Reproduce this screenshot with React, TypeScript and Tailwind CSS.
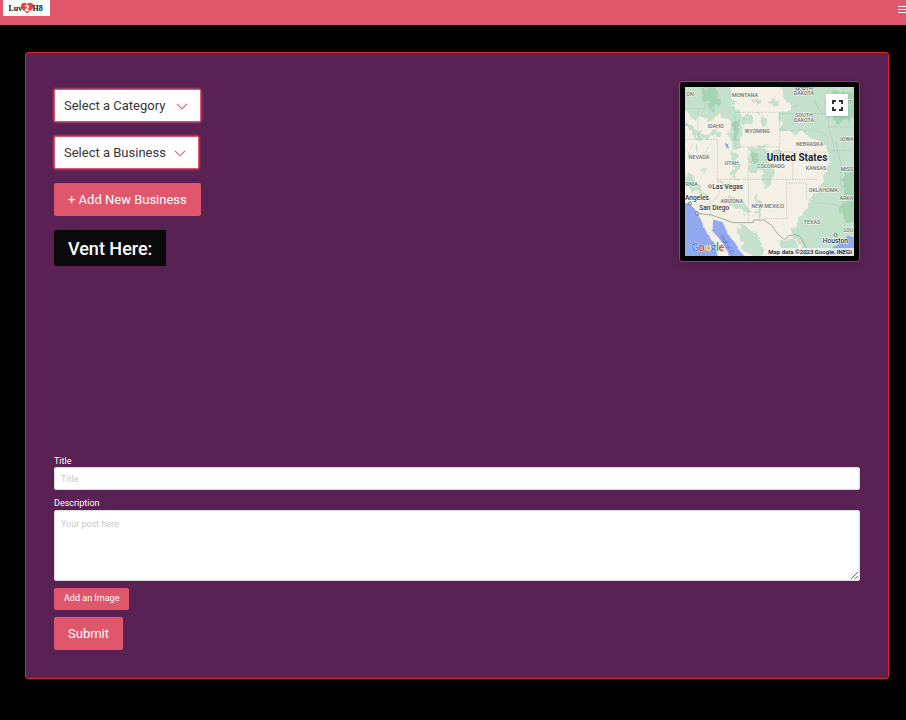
import type { ReactNode } from "react";

type MapLabel = { x: number; y: number; text: string };

const stateLabels: MapLabel[] = [
  { x: 30, y: 43, text: "ON" },
  { x: 195, y: 46, text: "MONTANA" },
  { x: 372, y: 27, text: "NORTH" },
  { x: 372, y: 40, text: "DAKOTA" },
  { x: 476, y: 65, text: "MINNESOT" },
  { x: 372, y: 105, text: "SOUTH" },
  { x: 372, y: 120, text: "DAKOTA" },
  { x: 107, y: 139, text: "IDAHO" },
  { x: 232, y: 152, text: "WYOMING" },
  { x: 389, y: 191, text: "NEBRASKA" },
  { x: 501, y: 177, text: "IOWA" },
  { x: 57, y: 231, text: "NEVADA" },
  { x: 155, y: 248, text: "UTAH" },
  { x: 273, y: 258, text: "COLORADO" },
  { x: 408, y: 263, text: "KANSAS" },
  { x: 501, y: 267, text: "MISS" },
  { x: 35, y: 311, text: "RNIA" },
  { x: 430, y: 330, text: "OKLAHOMA" },
  { x: 499, y: 353, text: "ARKA" },
  { x: 155, y: 362, text: "ARIZONA" },
  { x: 263, y: 377, text: "NEW MEXICO" },
  { x: 396, y: 427, text: "TEXAS" },
  { x: 505, y: 451, text: "LOU" },
];

const cityLabels: MapLabel[] = [
  { x: 143, y: 320, text: "Las Vegas" },
  { x: 51, y: 353, text: "Angeles" },
  { x: 103, y: 383, text: "San Diego" },
  { x: 466, y: 484, text: "Houston" },
];

const cityDots = [
  [90, 313],
  [30, 364],
  [51, 394],
  [467, 459],
];

function RegionMap() {
  return (
    <svg
      viewBox="15 15 507 507"
      className="block h-full w-full font-[Roboto,sans-serif]"
      role="img"
      aria-label="Map of the United States"
    >
      <defs>
        <filter id="rough" x="0%" y="0%" width="100%" height="100%">
          <feTurbulence type="fractalNoise" baseFrequency="0.045" numOctaves="3" seed="4" />
          <feDisplacementMap in="SourceGraphic" scale="38" xChannelSelector="R" yChannelSelector="G" />
        </filter>
        <filter id="shore" x="0%" y="0%" width="100%" height="100%">
          <feTurbulence type="fractalNoise" baseFrequency="0.06" numOctaves="2" seed="9" />
          <feDisplacementMap in="SourceGraphic" scale="9" xChannelSelector="R" yChannelSelector="G" />
        </filter>
      </defs>

      <rect x="15" y="15" width="507" height="507" fill="#f5f0e5" />

      <g filter="url(#rough)">
        <g fill="#c3e1cb">
          <path d="M-60 -60H145L150 40L175 80L195 100L190 140L178 200L150 195L152 120L118 95L95 115L60 105L45 125L20 90L-60 100Z" />
          <path d="M290 -60H600V600H350L375 500L345 470L335 440L370 400L390 375L395 350L420 310L430 285L445 250L450 215L425 185L400 165L350 150L300 140L298 95L335 75L310 50Z" />
          <path d="M20 110L45 150L85 160L120 135L115 165L70 172L25 150Z" />
          <path d="M208 198L245 195L262 205L300 215L290 240L268 225L280 290L262 325L245 300L250 262L225 280L208 250Z" />
          <path d="M190 95L215 110L208 130L192 125Z" />
          <path d="M240 95L262 105L255 140L244 120Z" />
          <path d="M150 205L175 215L178 250L165 280L150 292L160 245Z" />
          <path d="M110 300L150 303L165 318L145 325L118 312Z" />
          <path d="M145 340L190 355L212 385L200 398L170 375L140 365Z" />
          <path d="M228 335L240 345L242 410L228 395Z" />
          <path d="M15 275L40 290L62 325L80 345L60 342L20 305Z" />
          <path d="M170 430L215 440L240 470L262 530H210L185 480Z" />
          <path d="M295 475L345 470L365 530H310Z" />
          <path d="M235 190L250 180L262 195Z M265 60L290 50L300 70L275 75Z M210 50L245 60L235 72Z" />
          <path d="M25 195L35 215L28 235Z M50 180L60 205L52 220Z M80 190L88 222L80 240Z M60 240L72 262L65 270Z" />
          <path d="M85 398L120 430L150 465L140 468L105 425Z" />
        </g>
        <g fill="#a5d4b3">
          <path d="M60 15H105L118 55L105 85L75 60Z" />
          <path d="M455 30L600 20V125L500 110L470 125L448 75Z" />
          <path d="M485 270L600 260V440L500 420L485 380L500 340Z" />
          <path d="M158 120L178 115L172 175L162 165Z M215 205L230 212L228 245L216 240Z" />
        </g>
        <g fill="#f5f0e5">
          <path d="M70 105L95 115L78 140L60 125Z M160 60L172 66L168 76Z M420 215L432 228L420 238Z" />
        </g>
      </g>

      <g filter="url(#shore)">
        <g fill="#91a9ee">
          <path d="M-20 360L30 364L45 385L56 398L68 425L78 448L105 485L122 560H-20Z" />
          <path d="M99 410L130 423L142 455L165 482L202 540H160L140 505L121 474L98 447Z" />
          <path d="M445 505L480 482L502 464L560 466V560H435Z" />
          <path d="M134 180L144 190L148 202L139 200Z M136 238L142 246L137 248Z M15 120L21 128L16 134Z" />
        </g>
      </g>

      <g fill="none" stroke="#a8b9e8" strokeWidth="2">
        <path d="M335 75L355 70M405 55L415 80L430 98M190 105L195 115M468 180L480 235M165 291L180 293" />
      </g>

      <g fill="none" stroke="#b5bbb4" strokeWidth="2" strokeDasharray="4 3">
        <path d="M15 172H112V292M54 80V172M75 15V80H15M166 91V195M166 91H299V195H166M299 95H445M299 145H400L425 150L445 165M205 195V424M112 292H410M338 210V292M299 195V210H338M338 210H465M320 292V410H252M320 303H380V353L410 362L445 365L492 375M445 15V135L455 165L465 210L482 238V303L492 375V430M445 135H522M455 205H522M482 292H522M15 275L90 350L92 398M112 292L118 335L95 365" />
      </g>
      <g fill="none" stroke="#aaa9a2" strokeWidth="3">
        <path d="M51 394L95 399L160 422H220V414H252L275 430L292 455L314 474L325 462L343 458L358 462L370 480L382 505L390 530" />
      </g>

      <g
        fontSize="16"
        fontWeight="500"
        fill="#6a716f"
        stroke="#f8f7f2"
        strokeWidth="3"
        paintOrder="stroke"
        textAnchor="middle"
      >
        {stateLabels.map((label) => (
          <text key={label.text + label.y} x={label.x} y={label.y}>
            {label.text}
          </text>
        ))}
      </g>

      <text x="120" y="464" fontSize="16" fill="#5273c9" transform="rotate(58 120 464)">
        Gulf of C
      </text>

      <g fontWeight="500" fill="#2f3336" stroke="#ffffff" strokeWidth="3" paintOrder="stroke" textAnchor="middle">
        <g fontSize="20">
          {cityLabels.map((label) => (
            <text key={label.text} x={label.x} y={label.y}>
              {label.text}
            </text>
          ))}
        </g>
        <text x="351" y="236" fontSize="30" fontWeight="700" fill="#202124">
          United States
        </text>
      </g>
      {cityDots.map(([cx, cy]) => (
        <circle key={cx} cx={cx} cy={cy} r="4.5" fill="#fff" stroke="#55595c" strokeWidth="2.5" />
      ))}

      <text
        x="34"
        y="506"
        fontSize="31"
        fontWeight="700"
        stroke="#fff"
        strokeWidth="2"
        paintOrder="stroke"
        className="font-[Lato,sans-serif]"
      >
        <tspan fill="#4285f4">G</tspan>
        <tspan fill="#ea4335">o</tspan>
        <tspan fill="#fbbc05">o</tspan>
        <tspan fill="#4285f4">g</tspan>
        <tspan fill="#34a853">l</tspan>
        <tspan fill="#ea4335">e</tspan>
      </text>

      <rect x="263" y="498" width="259" height="24" fill="#f5f5f5" fillOpacity="0.8" />
      <text x="265" y="516" fontSize="18" fontWeight="500" fill="#111">
        Map data ©2023 Google, INEGI
      </text>
    </svg>
  );
}

function DropDown({ id, label, width }: { id: string; label: string; width: string }) {
  return (
    <div className={`relative h-[33px] ${width}`}>
      <select
        id={id}
        aria-label={label}
        className="h-full w-full appearance-none rounded-xs border border-[#e0566b] bg-white pt-px pl-[9px] text-[13px] text-[#363636] shadow-[0_0_2px_1px_#e0566b99] outline-none"
      >
        <option>{label}</option>
      </select>
      <svg
        viewBox="0 0 12 7"
        className="pointer-events-none absolute top-[14px] right-[13px] h-[7px] w-3"
        fill="none"
        stroke="#e0566b"
        strokeWidth="1.1"
        aria-hidden="true"
      >
        <path d="M1 0.8L6 5.8L11 0.8" />
      </svg>
    </div>
  );
}

function PinkButton({ children, className, type = "button" }: { children: ReactNode; className: string; type?: "button" | "submit" }) {
  return (
    <button type={type} className={`block rounded-xs bg-[#e0566b] whitespace-nowrap text-white ${className}`}>
      {children}
    </button>
  );
}

function Logo() {
  return (
    <a href="#" aria-label="Luv 2 H8 home" className="block h-4 w-[47px] bg-white">
      <svg viewBox="0 0 47 16" className="block h-full w-full font-['Liberation_Serif',serif]" aria-hidden="true">
        <path
          d="M24.2 13.6C21.5 11.2 17.9 9 17.9 6.2C17.9 2.3 22.6 1.9 24.2 4.2C25.8 1.9 30.5 2.3 30.5 6.2C30.5 9 26.9 11.2 24.2 13.6Z"
          fill="#ea4340"
        />
        <g fontSize="8" fontWeight="700">
          <text x="5.5" y="10.5" fill="#111">Luv</text>
          <text x="29.5" y="10.5" fill="#111">H8</text>
          <text x="22" y="10.5" fill="#fff" stroke="#fff" strokeWidth="0.5">2</text>
        </g>
      </svg>
    </a>
  );
}

export default function App() {
  return (
    <div className="min-h-screen overflow-x-hidden bg-black font-[Roboto,sans-serif]">
      <header className="flex h-[25px] items-start justify-between bg-[#e0566b] pl-[3px]">
        <Logo />
        <button type="button" aria-label="Open menu" className="flex h-[19px] w-2 flex-col justify-center gap-[2px]">
          <span className="block h-px w-full bg-white" />
          <span className="block h-px w-full bg-white" />
          <span className="block h-px w-full bg-white" />
        </button>
      </header>

      <main className="mt-[27px] mr-[17px] mb-10 ml-[25px] rounded-[3px] border border-[#dc281e] bg-[#592154] p-7">
        <section className="flex items-start justify-between">
          <div className="flex flex-col items-start gap-[14px] pt-2">
            <DropDown id="category" label="Select a Category" width="w-[147px]" />
            <DropDown id="business" label="Select a Business" width="w-[145px]" />
            <PinkButton className="h-[33px] px-[14px] text-[13px]">+ Add New Business</PinkButton>
            <h1 className="flex h-9 items-center rounded-xs bg-[#0a0a0a] px-[14px] text-[18px] font-medium text-white">
              Vent Here:
            </h1>
          </div>
          <div className="size-[181px] rounded-[3px] border border-[#dc281e] bg-black p-[5px] shadow-[0_4px_8px_#0a0a0a1a]">
            <div className="relative size-[169px]">
              <RegionMap />
              <button
                type="button"
                aria-label="Toggle fullscreen view"
                className="absolute top-[7px] right-[6px] flex size-[22px] items-center justify-center rounded-[1px] bg-white shadow"
              >
                <svg viewBox="0 0 11 11" className="size-[11px]" fill="none" stroke="#333" strokeWidth="2" aria-hidden="true">
                  <path d="M1 4V1H4M7 1H10V4M10 7V10H7M4 10H1V7" />
                </svg>
              </button>
            </div>
          </div>
        </section>

        <form className="mt-[189px] flex flex-col items-start" onSubmit={(event) => event.preventDefault()}>
          <label htmlFor="title" className="h-3 text-[9px] leading-3 text-white">
            Title
          </label>
          <input
            id="title"
            type="text"
            placeholder="Title"
            className="h-[23px] w-full rounded-xs border border-[#dbdbdb] bg-white px-[6px] text-[9px] text-[#363636] outline-none placeholder:text-[#c8c8c8]"
          />
          <label htmlFor="description" className="mt-[7px] h-[13px] text-[9px] leading-[13px] text-white">
            Description
          </label>
          <textarea
            id="description"
            placeholder="Your post here"
            className="block h-[71px] w-full resize-y rounded-xs border border-[#dbdbdb] bg-white px-[6px] py-[7px] text-[9px] leading-[13px] text-[#363636] outline-none placeholder:text-[#c8c8c8]"
          />
          <PinkButton className="mt-[7px] h-[22px] px-[10px] text-[9px]">Add an Image</PinkButton>
          <PinkButton type="submit" className="mt-[7px] h-[33px] px-[14px] text-[13px]">
            Submit
          </PinkButton>
        </form>
      </main>
    </div>
  );
}
